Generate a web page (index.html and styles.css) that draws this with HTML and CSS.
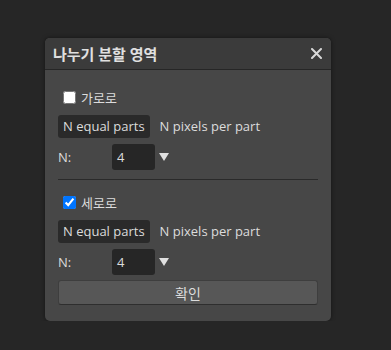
FILE: index.html
```html
<!DOCTYPE html>
<html lang="ko">
<head>
    <meta charset="UTF-8">
    <title>나누기 분할 영역</title>
    <link rel="stylesheet" href="styles.css">
</head>
<body>
    <div class="dialog">
        <div class="header">
            <span class="title">나누기 분할 영역</span>
            <svg class="close" width="11" height="11" viewBox="0 0 11 11">
                <path d="M1 1 L10 10 M10 1 L1 10" stroke="#d8d8d8" stroke-width="2" stroke-linecap="round"/>
            </svg>
        </div>
        <div class="content">
            <label class="check"><input type="checkbox"> 가로로</label>
            <div class="modes">
                <span class="mode active">N equal parts</span>
                <span class="mode">N pixels per part</span>
            </div>
            <div class="nrow">
                <span class="nlabel">N:</span>
                <span class="num">4</span>
                <span class="arrow"></span>
            </div>
            <hr class="sep">
            <label class="check"><input type="checkbox" checked> 세로로</label>
            <div class="modes">
                <span class="mode active">N equal parts</span>
                <span class="mode">N pixels per part</span>
            </div>
            <div class="nrow">
                <span class="nlabel">N:</span>
                <span class="num">4</span>
                <span class="arrow"></span>
            </div>
            <button class="ok">확인</button>
        </div>
    </div>
</body>
</html>
```

FILE: styles.css
```css
body {
    margin: 0;
    padding: 38px 0 0 45px;
    background-color: #262626;
    font-family: "Open Sans", "Noto Sans CJK KR", sans-serif;
    font-size: 13px;
    color: #dcdcdc;
}
.dialog {
    width: 286px;
    height: 283px;
    background-color: #474747;
    border-radius: 5px;
    box-shadow: 0 0 4px rgba(0, 0, 0, 0.5);
    overflow: hidden;
}
.header {
    height: 31px;
    background-color: #3b3b3b;
    border-bottom: 1px solid #262626;
    display: flex;
    align-items: center;
    justify-content: space-between;
    padding: 0 9px 0 8px;
}
.title {
    font-weight: bold;
    font-size: 15px;
    color: #e0e0e0;
}
.close {
    display: block;
}
.content {
    padding: 17px 13px 0 13px;
}
.check {
    display: flex;
    align-items: center;
    gap: 5px;
    margin-left: 5px;
    height: 20px;
}
.check input {
    margin: 0;
    width: 13px;
    height: 13px;
}
.modes {
    display: flex;
    align-items: center;
    gap: 5px;
    margin-top: 8px;
}
.mode {
    padding: 2px 5px 3px 5px;
    border-radius: 3px;
}
.mode.active {
    background-color: #2a2a2a;
}
.nrow {
    display: flex;
    align-items: center;
    margin-top: 6px;
    height: 26px;
}
.nlabel {
    width: 54px;
}
.num {
    width: 38px;
    height: 26px;
    line-height: 26px;
    padding-left: 5px;
    background-color: #262626;
    border-radius: 3px;
}
.arrow {
    margin-left: 4px;
    width: 0;
    height: 0;
    border-left: 5px solid transparent;
    border-right: 5px solid transparent;
    border-top: 8px solid #e0e0e0;
}
.sep {
    border: 0;
    border-top: 1px solid #2a2a2a;
    margin: 9px 0 12px 0;
}
.ok {
    display: block;
    width: 100%;
    margin-top: 5px;
    height: 25px;
    background-color: #575757;
    border: 1px solid #3e3e3e;
    border-bottom-color: #2e2e2e;
    border-radius: 3px;
    color: #dcdcdc;
    font-family: "Open Sans", "Noto Sans CJK KR", sans-serif;
    font-size: 14px;
}
```
